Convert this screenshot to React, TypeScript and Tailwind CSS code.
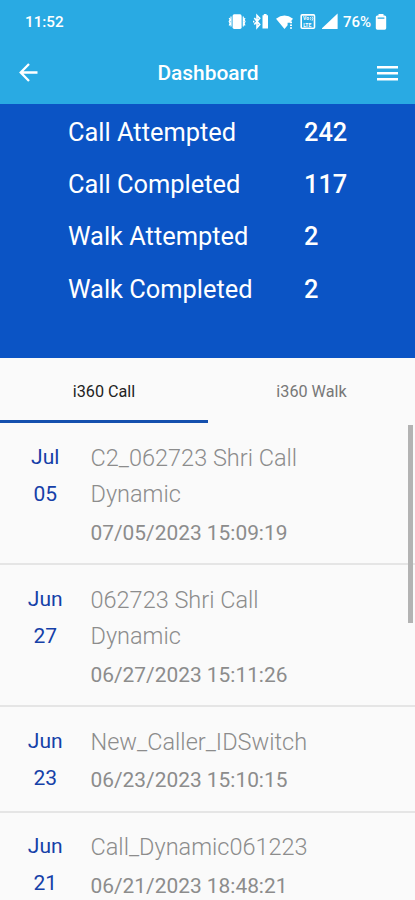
// Dashboard screen: call/walk totals on top, dated list of calls below.

const STATS = [
  { label: 'Call Attempted', value: '242' },
  { label: 'Call Completed', value: '117' },
  { label: 'Walk Attempted', value: '2' },
  { label: 'Walk Completed', value: '2' },
];

interface CallEntry {
  month: string;
  day: string;
  title: string[];
  time: string;
}

const CALLS: CallEntry[] = [
  { month: 'Jul', day: '05', title: ['C2_062723 Shri Call', 'Dynamic'], time: '07/05/2023 15:09:19' },
  { month: 'Jun', day: '27', title: ['062723 Shri Call', 'Dynamic'], time: '06/27/2023 15:11:26' },
  { month: 'Jun', day: '23', title: ['New_Caller_IDSwitch'], time: '06/23/2023 15:10:15' },
  { month: 'Jun', day: '21', title: ['Call_Dynamic061223'], time: '06/21/2023 18:48:21' },
];

// Vibrate, bluetooth, wifi, VoLTE badge and signal glyphs
const StatusIcons = () => (
  <svg width="112" height="20" viewBox="228 12 112 20" fill="currentColor" aria-hidden="true">
    <rect x="232.6" y="14.3" width="9" height="14.6" rx="1.6" />
    <path d="M231 16.5v10M243.3 16.5v10M229.2 18l.9 1.8-.9 1.8.9 1.8-.9 2M245 18l-.9 1.8.9 1.8-.9 1.8.9 2" fill="none" stroke="currentColor" strokeWidth="1.2" />
    <path d="M254.3 18l5.4 6.6-2.7 3V15.4l2.7 2.8-5.4 6.4" fill="none" stroke="currentColor" strokeWidth="1.6" />
    <path d="M253 20.8h1.4v1.6h-1.4zM262.5 15.2h1.3v-1.1h2.8v1.1h1.4v13.3h-5.5z" />
    <path d="M276 18.8q8.5-6.8 17 0l-3.2 4h-2.2v2.5l-3.1 3.6z" />
    <path d="M290 21.6h2v1.6h-2zM290 24.4h2v1.6h-2zM290 27.2h2v1.6h-2z" />
    <rect x="301.2" y="14.9" width="13.3" height="13.3" rx="1" fill="none" stroke="currentColor" strokeWidth="1.6" />
    <text x="303" y="20.4" fontSize="5" fontWeight="700">Vo</text>
    {/* Sound wave beside the badge text */}
    <path d="M310.4 17q1.2 1.6 0 3.2M312 16.4q1.8 2.2 0 4.4" fill="none" stroke="currentColor" strokeWidth="0.8" />
    <text x="303.2" y="26.6" fontSize="5" fontWeight="700">LTE</text>
    <path d="M322 29V28.3L337.6 13.5V29z" />
  </svg>
);

const BatteryIcon = () => (
  <svg width="12" height="18" viewBox="0 0 12 18" fill="currentColor" aria-hidden="true">
    <path fillRule="evenodd" d="M3.5 1h5v1.5h1.2q1.5 0 1.5 1.5v11.3q0 1.4-1.5 1.4H2.3q-1.5 0-1.5-1.4V4q0-1.5 1.5-1.5h1.2zM2.6 4.6v1.1h6.8V4.6z" />
  </svg>
);

const Header = () => (
  <header className="h-[104px] shrink-0 bg-[#29aae3] text-white">
    {/* Status bar */}
    <div className="flex h-11 items-center pr-[28px] pl-[25px]">
      <span className="pt-px text-[15.2px] font-medium">11:52</span>
      <div className="ml-auto flex items-center">
        <StatusIcons />
        <span className="ml-[3px] w-[32px] pt-px text-[15px] font-medium">76%</span>
        <BatteryIcon />
      </div>
    </div>
    {/* Title bar */}
    <div className="flex h-[58px] items-center justify-between pr-[17px] pl-[19px]">
      <button type="button" aria-label="Back" className="w-[20px]">
        <svg width="19" height="20" viewBox="0 0 19 20" fill="none" stroke="currentColor" strokeWidth="2.3">
          <path d="M18.5 9.5H2M10 1L1.7 9.5l8.3 8.5" />
        </svg>
      </button>
      <h1 className="pt-px text-[20.9px] font-medium">Dashboard</h1>
      <button type="button" aria-label="Menu" className="w-[21px]">
        <svg width="21" height="15" viewBox="0 0 21 15" fill="currentColor">
          <path d="M0 0h21v2.6H0zM0 6h21v2.6H0zM0 12h21v2.6H0z" />
        </svg>
      </button>
    </div>
  </header>
);

const CallRow = ({ month, day, title, time }: CallEntry) => (
  <li className="flex border-b-2 border-[#e5e5e5] pt-[16.5px] pb-3">
    <div className="-mt-px w-[90.5px] shrink-0 text-center text-[21px] leading-[37px] text-[#1540a8]">
      <p>{month}</p>
      <p>{day}</p>
    </div>
    <div className="text-[#8c8c8c]">
      {title.map(line => (
        <p key={line} className="text-[23.5px] leading-[36.5px] font-light">{line}</p>
      ))}
      <p className="mt-[2px] text-[20.9px] leading-[36.5px]">{time}</p>
    </div>
  </li>
);

const App = () => (
  <div className="flex h-[900px] w-[415px] flex-col overflow-hidden bg-[#fafafa] font-['Roboto',sans-serif]">
    <Header />

    {/* Totals */}
    <section className="h-[254px] shrink-0 bg-[#0b54c5] pt-[2px] pl-[68px] text-[25.4px] leading-[52.2px] text-white">
      {STATS.map(stat => (
        <div key={stat.label} className="flex">
          <span className="w-[236px]">{stat.label}</span>
          <span className="font-medium">{stat.value}</span>
        </div>
      ))}
    </section>

    {/* Tabs */}
    <nav className="flex h-[65px] shrink-0 text-[16.2px]">
      <button type="button" className="w-[208px] border-b-[3px] border-[#1550ae] pt-[7px] text-[#222222]">i360 Call</button>
      <button type="button" className="flex-1 pt-[4px] text-[#777777]">i360 Walk</button>
    </nav>

    <main className="relative min-h-0 flex-1 overflow-hidden">
      <ul>
        {CALLS.map(call => (
          <CallRow key={call.time} {...call} />
        ))}
      </ul>
      {/* Scroll indicator */}
      <div className="absolute top-[2px] right-[2px] h-[198px] w-[5px] bg-[#b3b3b3]" />
    </main>
  </div>
);

export default App;
